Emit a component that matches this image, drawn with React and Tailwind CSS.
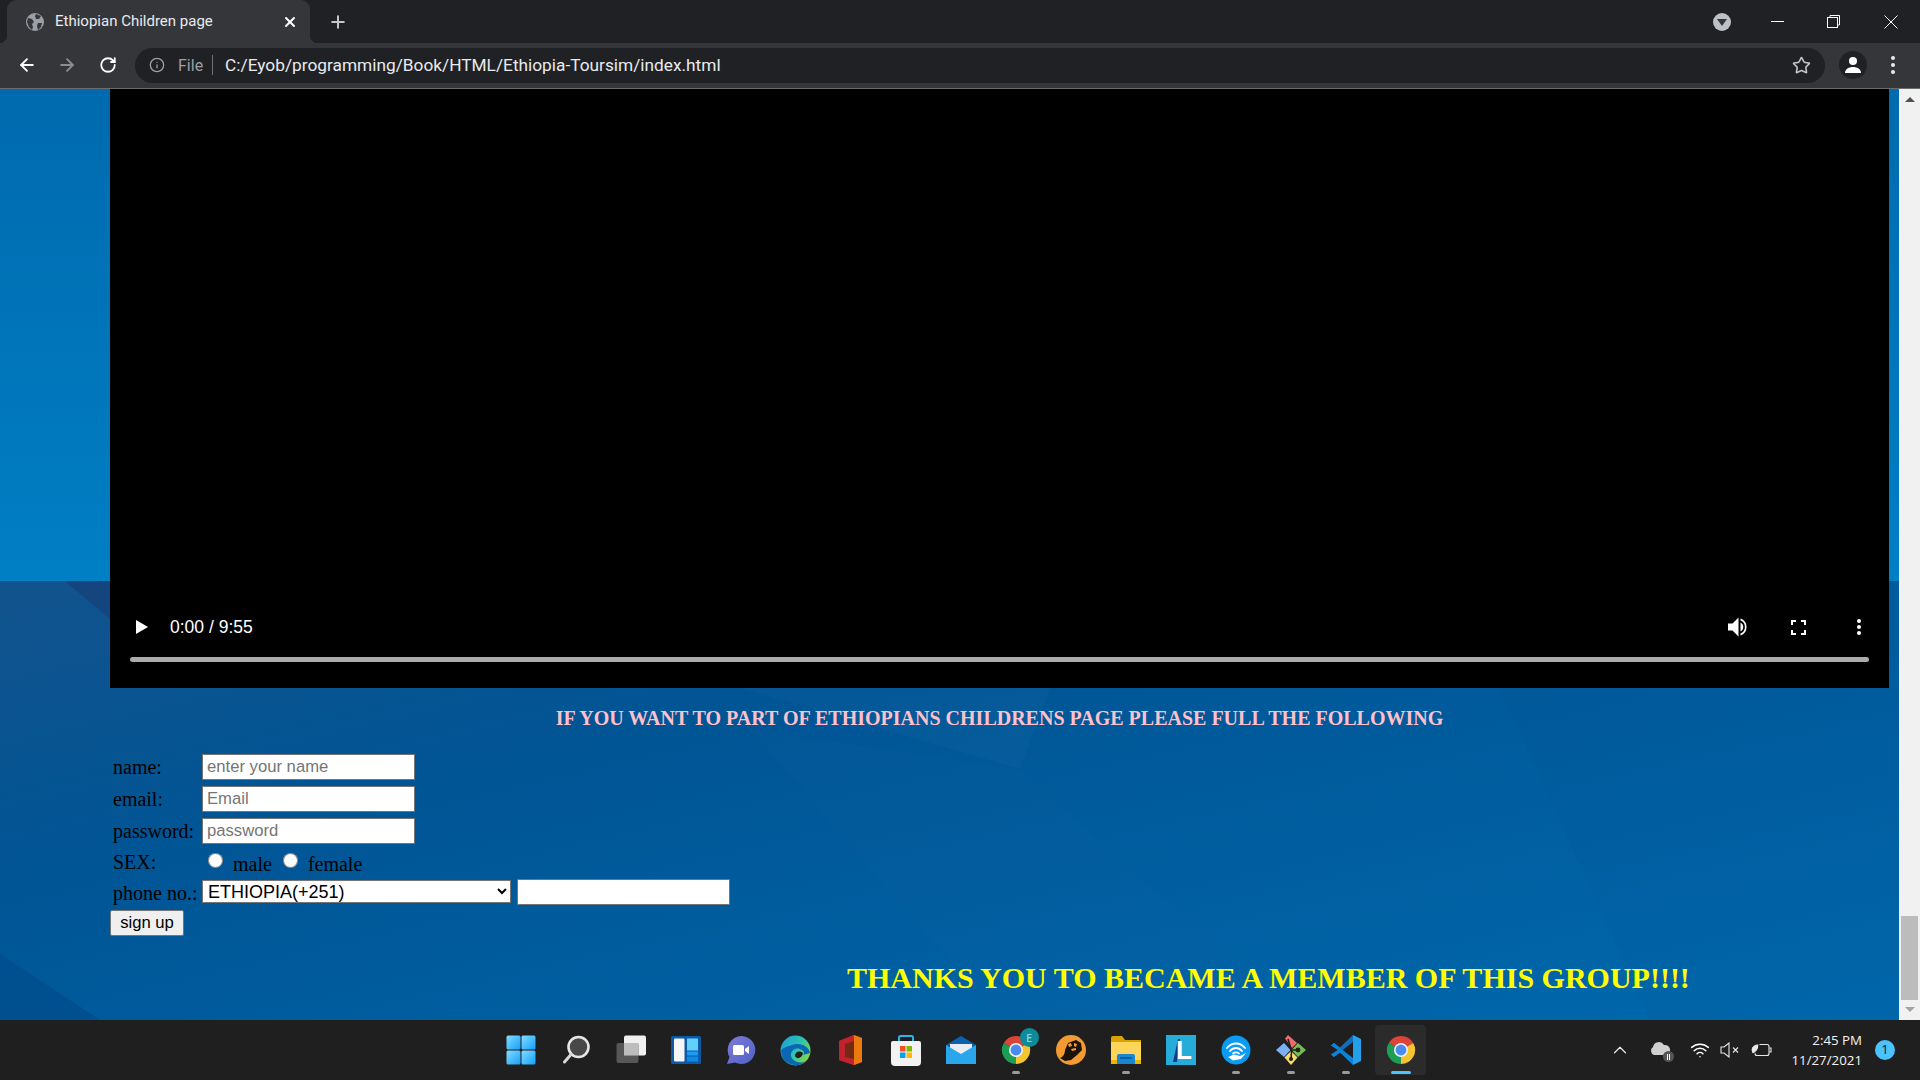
import { ArrowLeft, ArrowRight, RotateCw, Info, Star, X, Plus, ChevronUp, Wifi } from 'lucide-react';

const Globe = () => (
  <svg width="20" height="20" viewBox="0 0 20 20">
    <circle cx="10" cy="10" r="9" fill="#9aa0a6" />
    <path d="M3 6l4 1 2 3-2 2 1 3-1 3-3-3-2-5zM11 2l5 2-2 3-3 0-1-3zM13 11l4 0-1 4-3 3-1-4z" fill="#35363a" />
  </svg>
);

const ChromeLogo = ({ size = 30 }) => (
  <svg width={size} height={size} viewBox="0 0 32 32">
    <path d="M16 16L3 8.5A15 15 0 0 1 29 8.5Z" fill="#db4437" />
    <path d="M16 16L29 8.5A15 15 0 0 1 16 31Z" fill="#f4c430" />
    <path d="M16 16L16 31A15 15 0 0 1 3 8.5Z" fill="#1e9e54" />
    <circle cx="16" cy="16" r="7.5" fill="#f1f3f4" />
    <circle cx="16" cy="16" r="5.8" fill="#4b8bf0" />
  </svg>
);

const StartIcon = () => (
  <svg width="30" height="30" viewBox="0 0 30 30">
    <defs>
      <linearGradient id="st" x1="0" y1="0" x2="1" y2="1">
        <stop offset="0" stopColor="#86dcff" />
        <stop offset="1" stopColor="#12a0fb" />
      </linearGradient>
    </defs>
    <rect x="0.5" y="0.5" width="14" height="14" rx="1.5" fill="url(#st)" />
    <rect x="15.5" y="0.5" width="14" height="14" rx="1.5" fill="url(#st)" />
    <rect x="0.5" y="15.5" width="14" height="14" rx="1.5" fill="url(#st)" />
    <rect x="15.5" y="15.5" width="14" height="14" rx="1.5" fill="url(#st)" />
  </svg>
);

const SearchIcon = () => (
  <svg width="30" height="30" viewBox="0 0 30 30">
    <circle cx="17.5" cy="12" r="10" fill="#484848" stroke="#e6e6e6" strokeWidth="2.6" />
    <path d="M10 19.5L3.5 27" stroke="#d8d8d8" strokeWidth="3" strokeLinecap="round" />
  </svg>
);

const TaskViewIcon = () => (
  <svg width="32" height="30" viewBox="0 0 32 30">
    <rect x="9" y="0.5" width="22" height="20" rx="2" fill="#f0f0f0" />
    <rect x="1.5" y="8" width="22" height="20" rx="2" fill="#5c5c5c" fillOpacity="0.92" />
    <rect x="9" y="8" width="14.5" height="12.5" fill="#bdbdbd" />
  </svg>
);

const WidgetsIcon = () => (
  <svg width="30" height="28" viewBox="0 0 30 28">
    <rect width="30" height="28" rx="1.5" fill="#0a5aa8" />
    <rect x="3" y="2.5" width="10.5" height="23" rx="1" fill="#f5f5f5" />
    <rect x="16" y="2.5" width="11" height="12" fill="#62d0fb" />
    <rect x="16" y="15.5" width="11" height="4" fill="#1d9bf0" />
    <rect x="16" y="20.5" width="11" height="5" fill="#0f8be6" />
  </svg>
);

const ChatIcon = () => (
  <svg width="30" height="30" viewBox="0 0 30 30">
    <defs>
      <linearGradient id="cht" x1="0" y1="0" x2="1" y2="1">
        <stop offset="0" stopColor="#7f7bd8" />
        <stop offset="1" stopColor="#4f62c4" />
      </linearGradient>
    </defs>
    <path d="M15.5 1A14 14 0 1 1 9 27.5L1 29 3.5 22A14 14 0 0 1 15.5 1Z" fill="url(#cht)" />
    <rect x="7" y="10" width="11" height="10" rx="1.5" fill="#fff" />
    <path d="M19 14l4-3v8l-4-3z" fill="#fff" />
  </svg>
);

const EdgeIcon = () => (
  <svg width="31" height="31" viewBox="0 0 31 31">
    <defs>
      <linearGradient id="edg" x1="0" y1="0" x2="1" y2="0.6">
        <stop offset="0" stopColor="#1a9ae0" />
        <stop offset="0.6" stopColor="#2cc3b0" />
        <stop offset="1" stopColor="#7dd64f" />
      </linearGradient>
    </defs>
    <circle cx="15.5" cy="15.5" r="15" fill="url(#edg)" />
    <path d="M1 16A14.5 14.5 0 0 0 25 26.5C19 29 12 26 11 21 10 15 17 11 22 15 25 17 24 19 23 20L30 18C29 11 20 7 12 10 6 12 2 13 1 16Z" fill="#0b66b4" />
    <path d="M15 21C15 17 19 15 23 18 22 23 17 25 15 21Z" fill="#1f1f1f" />
  </svg>
);

const OfficeIcon = () => (
  <svg width="24" height="30" viewBox="0 0 24 30">
    <path d="M0 6L15 0 23 3V27L15 30 0 25V6Z" fill="#d83b01" />
    <path d="M15 0L23 3V27L15 30Z" fill="#ea7a10" />
    <path d="M0 6L15 0V6L6 9V22L15 24V30L0 25Z" fill="#c4202f" />
    <path d="M6 9L15 6V24L6 22Z" fill="#1f1f1f" fillOpacity="0.55" />
  </svg>
);

const StoreIcon = () => (
  <svg width="30" height="31" viewBox="0 0 30 31">
    <path d="M8 7V2.5A1.5 1.5 0 0 1 9.5 1h11A1.5 1.5 0 0 1 22 2.5V7" fill="none" stroke="#29b6f0" strokeWidth="2" />
    <path d="M2 6h26a2 2 0 0 1 2 2v19a4 4 0 0 1-4 4H4a4 4 0 0 1-4-4V8a2 2 0 0 1 2-2Z" fill="#f2f2f2" />
    <rect x="9" y="11" width="5.5" height="5.5" fill="#f25022" />
    <rect x="15.5" y="11" width="5.5" height="5.5" fill="#7fba00" />
    <rect x="9" y="17.5" width="5.5" height="5.5" fill="#00a4ef" />
    <rect x="15.5" y="17.5" width="5.5" height="5.5" fill="#ffb900" />
  </svg>
);

const MailIcon = () => (
  <svg width="30" height="28" viewBox="0 0 30 28">
    <path d="M0 9L15 0 30 9V28H0Z" fill="#0b62ae" />
    <path d="M4 8h22v12H4z" fill="#e8eef4" />
    <path d="M0 9L15 18 30 9V28H0Z" fill="#29a6ec" />
  </svg>
);

const ChromeBadge = () => (
  <div className="relative w-[30px] h-[30px]">
    <ChromeLogo size={30} />
    <div className="absolute top-[-7px] right-[-8px] w-[19px] h-[19px] rounded-full bg-[#0f8a98] text-[#7fd8e0] text-[11px] leading-[19px] text-center font-['Open_Sans',sans-serif] font-semibold">
      E
    </div>
  </div>
);

const OrangeIcon = () => (
  <svg width="30" height="30" viewBox="0 0 30 30">
    <circle cx="15" cy="15" r="15" fill="#f39a31" />
    <path d="M4 23C7 22 9 19 9 15L12 8 20 5 25 8 26 15 21 20 15 25 9 26Z" fill="#1c1408" />
    <path d="M12 9l3-1 1 3-3 1zM18 8l3 1-1 3-2-1zM15 14l5-1 0 2-4 1z" fill="#f39a31" />
  </svg>
);

const FolderIcon = () => (
  <svg width="30" height="28" viewBox="0 0 30 28">
    <path d="M0 2a2 2 0 0 1 2-2h9l3 4h16v6H0Z" fill="#d9a400" />
    <path d="M0 6h30v20a2 2 0 0 1-2 2H2a2 2 0 0 1-2-2Z" fill="#fcd55a" />
    <rect x="0" y="24" width="30" height="4" fill="#eeb400" />
    <path d="M6 20a2 2 0 0 1 2-2h14a2 2 0 0 1 2 2v8H6Z" fill="#1a86d0" />
    <rect x="9" y="21" width="12" height="2" fill="#0b5ea8" />
  </svg>
);

const LIcon = () => (
  <svg width="30" height="30" viewBox="0 0 30 30">
    <rect width="30" height="30" fill="#26acd9" />
    <path d="M7 27L12 4h2l-3 23z" fill="#123a8a" />
    <text x="10" y="24" fontSize="26" fontWeight="700" fill="#fff" fontFamily="Liberation Sans, sans-serif">L</text>
  </svg>
);

const WifiHandIcon = () => (
  <svg width="30" height="30" viewBox="0 0 30 30">
    <circle cx="15" cy="15" r="14.5" fill="#0a9cf5" />
    <path d="M6 13C11 7 19 7 24 13M9 16C12.5 12 17.5 12 21 16M12 18.5C14 17 16 17 18 18.5" fill="none" stroke="#fff" strokeWidth="1.8" strokeLinecap="round" />
    <path d="M7 22L13 19.5 19 21 25 18 20 24 12 25.5Z" fill="#fff" />
  </svg>
);

const GitIcon = () => (
  <svg width="30" height="30" viewBox="0 0 30 30">
    <path d="M8 8L14.5 15 8 22 0 15Z" fill="#7cb0f5" />
    <path d="M22 8L30 15 22 22 15.5 15Z" fill="#76bc52" />
    <path d="M15 16L21.5 22.5 15 30 8.5 22.5Z" fill="#f3dc6d" />
    <path d="M9 3.5L12 0 21 8 16 13Z" fill="#f06a6a" />
    <path d="M12 4L15.5 16 15 25M15 15L22 15" stroke="#1f1f1f" strokeWidth="1.6" fill="none" />
    <circle cx="15" cy="24" r="2" fill="#1f1f1f" />
    <circle cx="22" cy="15" r="2.4" fill="#1f1f1f" />
  </svg>
);

const VsCodeIcon = () => (
  <svg width="30" height="30" viewBox="0 0 30 30">
    <path d="M22 0L22 7 9 17 3 22 0 19.5 7 15 0 10.5 3 8 9 12.5Z" fill="#0f6fbe" />
    <path d="M22 30L22 23 9 13 3 8 0 10.5 7 15 0 19.5 3 22 9 17.5Z" fill="#0a83d8" />
    <path d="M22 0L30 4V26L22 30Z" fill="#23a0ea" />
  </svg>
);

const taskbarApps = [
  { id: 'start', icon: <StartIcon /> },
  { id: 'search', icon: <SearchIcon /> },
  { id: 'taskview', icon: <TaskViewIcon /> },
  { id: 'widgets', icon: <WidgetsIcon /> },
  { id: 'chat', icon: <ChatIcon /> },
  { id: 'edge', icon: <EdgeIcon /> },
  { id: 'office', icon: <OfficeIcon /> },
  { id: 'store', icon: <StoreIcon /> },
  { id: 'mail', icon: <MailIcon /> },
  { id: 'chrome-e', icon: <ChromeBadge />, open: true },
  { id: 'orange', icon: <OrangeIcon /> },
  { id: 'folder', icon: <FolderIcon />, open: true },
  { id: 'l', icon: <LIcon /> },
  { id: 'wifi', icon: <WifiHandIcon />, open: true },
  { id: 'git', icon: <GitIcon />, open: true },
  { id: 'vscode', icon: <VsCodeIcon />, open: true },
  { id: 'chrome', icon: <ChromeLogo size={30} />, active: true },
];

const TabBar = () => (
  <div className="flex h-[43px] bg-[#202124] pl-[7px] items-stretch">
    <div className="relative flex w-[303px] items-center rounded-t-[9px] bg-[#35363a] pl-[18px] pr-[12px] text-white">
      <div className="absolute bottom-0 left-[-8px] h-[8px] w-[8px] bg-[radial-gradient(circle_at_0_0,transparent_8px,#35363a_8.5px)]" />
      <div className="absolute bottom-0 right-[-8px] h-[8px] w-[8px] bg-[radial-gradient(circle_at_100%_0,transparent_8px,#35363a_8.5px)]" />
      <Globe />
      <span className="ml-[10px] flex-1 text-[15px] font-['Roboto',sans-serif] text-[#e8eaed]">Ethiopian Children page</span>
      <X size={16} strokeWidth={3} />
    </div>
    <div className="ml-[18px] flex items-center text-[#c4c7c9]">
      <Plus size={20} strokeWidth={2.4} />
    </div>
    <div className="ml-auto flex items-center">
      <div className="mr-[18px] flex h-[18px] w-[18px] items-center justify-center rounded-full bg-[#bdc1c6]">
        <div className="mt-[2px] h-0 w-0 border-x-[5px] border-t-[7px] border-x-transparent border-t-[#35363a]" />
      </div>
      <div className="flex w-[57px] justify-center">
        <div className="h-px w-[13px] bg-white" />
      </div>
      <div className="flex w-[55px] justify-center">
        <svg width="13" height="13" viewBox="0 0 13 13" fill="none" stroke="#fff">
          <rect x="0.5" y="2.5" width="10" height="10" />
          <path d="M3 2.5V0.5H12.5V10H10.5" />
        </svg>
      </div>
      <div className="flex w-[59px] justify-center text-white">
        <svg width="14" height="14" viewBox="0 0 14 14" stroke="#fff" strokeWidth="1">
          <path d="M0.5 0.5L13.5 13.5M13.5 0.5L0.5 13.5" />
        </svg>
      </div>
    </div>
  </div>
);

const Toolbar = () => (
  <div className="flex h-[46px] items-center border-b border-[#6b6c6e] bg-[#35363a] pb-[1px]">
    <div className="flex w-[135px] items-center pl-[17px] gap-[20px] text-white">
      <ArrowLeft size={20} strokeWidth={2.2} />
      <ArrowRight size={20} strokeWidth={2.2} className="text-[#8b8d90]" />
      <RotateCw size={18} strokeWidth={2.4} className="ml-[2px]" />
    </div>
    <div className="flex h-[35px] flex-1 items-center rounded-full bg-[#202124] pl-[14px] pr-[14px]">
      <Info size={16} className="text-[#9aa0a6]" />
      <span className="ml-[13px] pt-[1px] text-[16px] font-['Roboto',sans-serif] text-[#9aa0a6]">File</span>
      <div className="ml-[9px] h-[20px] w-px bg-[#6f7276]" />
      <span className="ml-[12px] flex-1 pt-[1px] text-[17.3px] font-['Roboto',sans-serif] text-[#e8eaed]">
        C:/Eyob/programming/Book/HTML/Ethiopia-Toursim/index.html
      </span>
      <Star size={19} strokeWidth={2} className="text-[#c4c7c9]" />
    </div>
    <div className="ml-[14px] flex h-[28px] w-[28px] items-center justify-center rounded-full bg-[#202124]">
      <svg width="18" height="18" viewBox="0 0 18 18" fill="#fff">
        <circle cx="9" cy="5" r="4" />
        <path d="M1 17c0-4 4-6 8-6s8 2 8 6z" />
      </svg>
    </div>
    <div className="ml-[24px] flex flex-col gap-[3px]">
      <div className="h-[4px] w-[4px] rounded-full bg-[#e8eaed]" />
      <div className="h-[4px] w-[4px] rounded-full bg-[#e8eaed]" />
      <div className="h-[4px] w-[4px] rounded-full bg-[#e8eaed]" />
    </div>
    <div className="w-[25px]" />
  </div>
);

const Wallpaper = () => (
  <svg className="absolute inset-0 h-full w-full" viewBox="0 0 1899 931" preserveAspectRatio="none">
    <defs>
      <linearGradient id="wpTop" x1="0" y1="0" x2="0" y2="1">
        <stop offset="0" stopColor="#006aae" />
        <stop offset="1" stopColor="#007fc5" />
      </linearGradient>
      <linearGradient id="wpBottom" x1="0" y1="0" x2="1" y2="1">
        <stop offset="0" stopColor="#12538d" />
        <stop offset="0.35" stopColor="#005595" />
        <stop offset="1" stopColor="#0069ad" />
      </linearGradient>
    </defs>
    <rect width="1899" height="492" fill="url(#wpTop)" />
    <rect y="492" width="1899" height="439" fill="url(#wpBottom)" />
    <path d="M65 492L110 492 110 530Z" fill="#15457f" />
    <path d="M0 865L100 931 0 931Z" fill="#00508f" />
    <path d="M740 599L1050 599 1020 680Z" fill="#2a74ae" fillOpacity="0.12" />
    <path d="M750 640L1020 680 1300 931 1000 931Z" fill="#1a6aa8" fillOpacity="0.08" />
    <path d="M1500 600L1899 600 1899 931 1650 931Z" fill="#004f8e" fillOpacity="0.08" />
  </svg>
);

const VideoPlayer = () => (
  <div className="flex h-[599px] w-[1779px] flex-col justify-end bg-black px-[20px] pb-[26px] text-white">
    <div className="mb-[15px] flex h-[30px] items-center pl-[6px] pr-[4px]">
      <div className="h-0 w-0 border-y-[7px] border-l-[12px] border-y-transparent border-l-white" />
      <span className="ml-[22px] text-[17.5px] font-['Liberation_Sans',sans-serif] font-normal">0:00 / 9:55</span>
      <div className="ml-auto flex items-center">
        <svg width="21" height="20" viewBox="0 0 21 20" fill="#fff">
          <path d="M0 6.5H4.5L10.5 0.5V19.5L4.5 13.5H0Z" />
          <path d="M12.5 5.5A5 5 0 0 1 12.5 14.5ZM12.5 1.5A9 9 0 0 1 12.5 18.5V16.5A7 7 0 0 0 12.5 3.5Z" />
        </svg>
        <svg width="15" height="15" viewBox="0 0 15 15" fill="none" stroke="#fff" strokeWidth="2" className="ml-[42px]">
          <path d="M1 5V1H5M10 1H14V5M14 10V14H10M5 14H1V10" />
        </svg>
        <div className="ml-[51px] mr-[4px] flex flex-col gap-[2px]">
          <div className="h-[4px] w-[4px] rounded-full bg-white" />
          <div className="h-[4px] w-[4px] rounded-full bg-white" />
          <div className="h-[4px] w-[4px] rounded-full bg-white" />
        </div>
      </div>
    </div>
    <div className="h-[5px] rounded-full bg-[#ababab]" />
  </div>
);

const labelClass = 'w-[89px] text-[20px] leading-[26px] text-black whitespace-nowrap';
const inputClass =
  'h-[26px] w-[213px] border border-[#767676] bg-white px-[4px] text-[16.67px] text-black placeholder:text-[#757575] font-["Liberation_Sans",sans-serif]';

const SignupForm = () => (
  <form className="flex flex-col items-start font-['Liberation_Serif',serif]">
    <div className="ml-[3px] flex h-[32px] items-start">
      <span className={labelClass}>name:</span>
      <input className={inputClass} type="text" placeholder="enter your name" />
    </div>
    <div className="ml-[3px] flex h-[32px] items-start">
      <span className={labelClass}>email:</span>
      <input className={inputClass} type="text" placeholder="Email" />
    </div>
    <div className="ml-[3px] flex h-[32px] items-start">
      <span className={labelClass}>password:</span>
      <input className={inputClass} type="text" placeholder="password" />
    </div>
    <div className="ml-[3px] flex h-[29px] items-start">
      <span className={`${labelClass} -mt-[1px]`}>SEX:</span>
      <div className="flex text-[20px] leading-[26px] text-black">
        <input type="radio" name="sex" className="ml-[6px] mt-[3px] h-[15px] w-[15px]" />
        <span className="ml-[10px] mt-[1px]">male</span>
        <input type="radio" name="sex" className="ml-[11px] mt-[3px] h-[15px] w-[15px]" />
        <span className="ml-[10px] mt-[1px]">female</span>
      </div>
    </div>
    <div className="ml-[3px] flex h-[31px] items-start">
      <span className={`${labelClass} mt-[1px]`}>phone no.:</span>
      <select
        defaultValue="et"
        className="mt-[1px] h-[23px] w-[309px] border border-[#767676] bg-white pl-[1px] text-[18px] leading-[20px] text-black font-['Liberation_Sans',sans-serif]"
      >
        <option value="et">ETHIOPIA(+251)</option>
      </select>
      <input className={`${inputClass} ml-[6px] w-[212px]`} type="text" />
    </div>
    <button
      type="button"
      className="h-[26px] w-[74px] rounded-[2px] border border-[#767676] bg-[#efefef] text-[16.67px] leading-[20px] text-black font-['Liberation_Sans',sans-serif]"
    >
      sign up
    </button>
  </form>
);

const Scrollbar = () => (
  <div className="relative flex w-[21px] flex-col items-center bg-[#f1f1f1]">
    <div className="mt-[8px] h-0 w-0 border-x-[5px] border-b-[5px] border-x-transparent border-b-[#505050]" />
    <div className="mt-[814px] h-[84px] w-[17px] bg-[#bcbcbc]" />
    <div className="mt-[7px] h-0 w-0 border-x-[5px] border-t-[5px] border-x-transparent border-t-[#a3a3a3]" />
  </div>
);

const Taskbar = () => (
  <div className="grid h-[60px] grid-cols-[1fr_auto_1fr] bg-[#1f1f1f]">
    <div />
    <div className="ml-[1px] flex">
      {taskbarApps.map(app => (
        <div key={app.id} className="relative flex h-[60px] w-[55px] items-center justify-center">
          {app.active && (
            <div className="absolute left-[2px] right-[2px] top-[5px] bottom-[5px] rounded-[4px] bg-[#2b2b2b]" />
          )}
          <div className="relative">{app.icon}</div>
          {app.open && <div className="absolute bottom-[6px] h-[3px] w-[8px] rounded-full bg-[#9a9a9a]" />}
          {app.active && <div className="absolute bottom-[6px] h-[3px] w-[20px] rounded-full bg-[#4cc2ff]" />}
        </div>
      ))}
    </div>
    <div className="flex items-center justify-end pr-[25px] text-white font-['Open_Sans',sans-serif]">
      <ChevronUp size={22} strokeWidth={1.3} className="text-[#e8e8e8]" />
      <div className="relative ml-[18px] h-[20px] w-[22px]">
        <svg width="22" height="16" viewBox="0 0 22 16" className="mt-[1px]">
          <path d="M5 14A4.5 4.5 0 0 1 4 6 6 6 0 0 1 15 4 5 5 0 0 1 17 14Z" fill="#d0d0d0" />
        </svg>
        <div className="absolute bottom-[-2px] right-[-3px] flex h-[11px] w-[11px] items-center justify-center gap-[1px] rounded-full bg-[#555]">
          <div className="h-[6px] w-[1px] bg-white" />
          <div className="h-[6px] w-[1px] bg-white" />
        </div>
      </div>
      <Wifi size={20} strokeWidth={1.8} className="ml-[19px]" />
      <svg width="20" height="16" viewBox="0 0 20 16" fill="none" stroke="#e8e8e8" strokeWidth="1.1" className="ml-[10px]">
        <path d="M1 5H4L9 1V15L4 11H1Z" />
        <path d="M13 5.5L18 10.5M18 5.5L13 10.5" />
      </svg>
      <svg width="22" height="16" viewBox="0 0 22 16" fill="none" stroke="#e8e8e8" strokeWidth="1.1" className="ml-[10px]">
        <rect x="5" y="2.5" width="14" height="11" rx="2" />
        <path d="M19.5 6H21V10H19.5" />
        <path d="M1 8C1 4 5 1.5 9 2 9 7 7 11 2 12Z" fill="#e8e8e8" stroke="#1f1f1f" />
      </svg>
      <div className="ml-[19px] flex flex-col items-end text-[13.3px] leading-[20px] text-[#f4f4f4]">
        <span>2:45 PM</span>
        <span>11/27/2021</span>
      </div>
      <div className="ml-[13px] flex h-[20px] w-[20px] items-center justify-center rounded-full bg-[#4cc2ff] text-[13px] text-[#10202a]">
        1
      </div>
    </div>
  </div>
);

const App = () => {
  return (
    <div className="flex h-screen w-full flex-col overflow-hidden">
      <TabBar />
      <Toolbar />
      <div className="flex h-[931px]">
        <main className="relative flex-1 overflow-hidden">
          <Wallpaper />
          <div className="relative flex flex-col pl-[110px] font-['Liberation_Serif',serif]">
            <VideoPlayer />
            <h2 className="mt-[18px] w-[1779px] text-center text-[20px] font-bold leading-[24px] text-[#ffc0cb]">
              IF YOU WANT TO PART OF ETHIOPIANS CHILDRENS PAGE PLEASE FULL THE FOLLOWING
            </h2>
            <div className="mt-[24px]">
              <SignupForm />
            </div>
            <h1 className="ml-[737px] mt-[24px] text-[30px] font-bold leading-[36px] text-[#ffff00] whitespace-nowrap">
              THANKS YOU TO BECAME A MEMBER OF THIS GROUP!!!!
            </h1>
          </div>
        </main>
        <Scrollbar />
      </div>
      <Taskbar />
    </div>
  );
};

export default App;
